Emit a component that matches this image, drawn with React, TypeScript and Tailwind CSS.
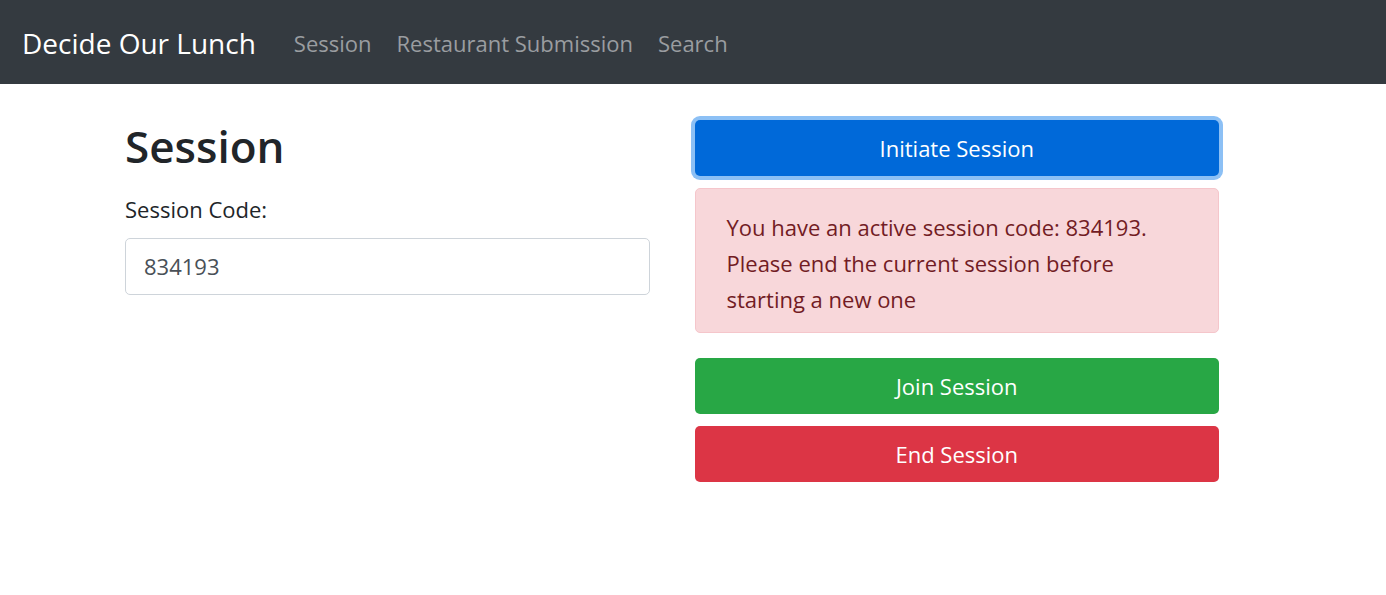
const font = { fontFamily: '"Open Sans", "Noto Sans", sans-serif' }

function NavBar() {
    return (
        <nav className="flex h-[84px] items-center bg-[#343a40] px-[22px] pt-[2px]">
            <span className="mr-[38px] text-[28px] text-white">Decide Our Lunch</span>
            <ul className="flex gap-[25px] text-[22px] text-[#9a9da0]">
                <li>Session</li>
                <li>Restaurant Submission</li>
                <li>Search</li>
            </ul>
        </nav>
    )
}

export default function App() {
    return (
        <div className="min-h-screen bg-white text-[#212529]" style={font}>
            <NavBar />
            <main className="ml-[125px] grid w-[1094px] grid-cols-2 gap-[45px] pt-[36px]">
                <section>
                    <h1 className="text-[44px] leading-[1.2] font-semibold">Session</h1>
                    <label className="mt-[21px] block text-[22px] leading-[30px]">Session Code:</label>
                    <input
                        type="text"
                        defaultValue="834193"
                        className="mt-[14px] h-[57px] w-full rounded-[5px] border border-[#ced4da] px-[18px] text-[22px] text-[#495057] outline-none"
                    />
                </section>
                <section className="flex flex-col">
                    <button
                        type="button"
                        className="h-[56px] w-full rounded-[5px] bg-[#0069d9] text-[22px] text-white ring-4 ring-[#8cc0f5]"
                    >
                        Initiate Session
                    </button>
                    <div className="mt-[12px] rounded-[5px] border border-[#f5c6cb] bg-[#f8d7da] pt-[20px] pb-[15px] pl-[31px] pr-[32px] text-[22px] leading-[36px] text-[#721c24]">
                        You have an active session code: 834193. Please end the current session before starting a new one
                    </div>
                    <button type="button" className="mt-[25px] h-[56px] w-full rounded-[5px] bg-[#28a745] text-[22px] text-white">
                        Join Session
                    </button>
                    <button type="button" className="mt-[12px] h-[56px] w-full rounded-[5px] bg-[#dc3545] text-[22px] text-white">
                        End Session
                    </button>
                </section>
            </main>
        </div>
    )
}
